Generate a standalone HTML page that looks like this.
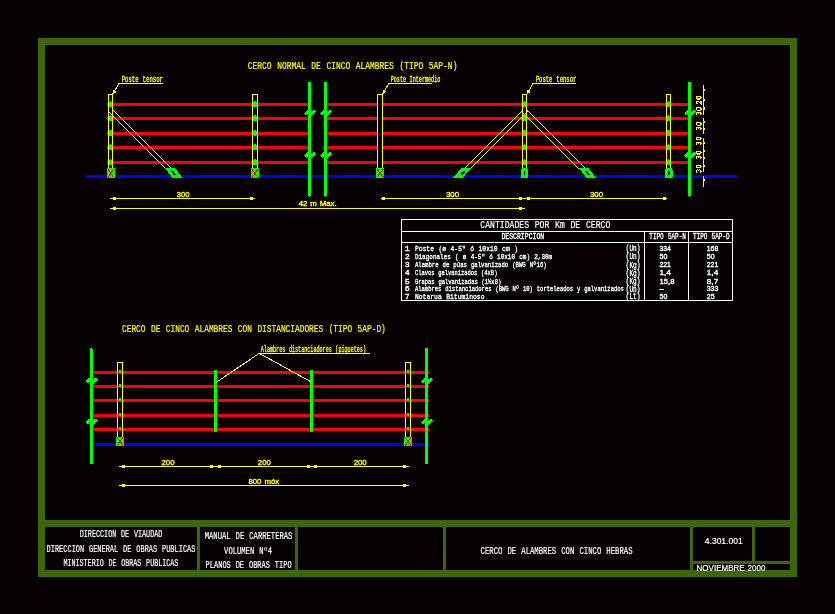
<!DOCTYPE html>
<html><head><meta charset="utf-8"><style>
html,body{margin:0;padding:0;background:#060000;width:835px;height:614px;overflow:hidden}
svg{display:block} text{will-change:transform} rect,line,polygon,path,ellipse{shape-rendering:crispEdges}
text{font-family:"Liberation Sans",sans-serif} .m{font-family:"Liberation Mono",monospace} .s{font-family:"Liberation Sans",sans-serif}
</style></head><body>
<svg width="835" height="614" viewBox="0 0 835 614">
<rect x="0" y="0" width="835" height="614" fill="#060000"/>
<rect x="38" y="38" width="759" height="7" fill="#3e6604" />
<rect x="38" y="570" width="759" height="7" fill="#3e6604" />
<rect x="38" y="38" width="7" height="539" fill="#3e6604" />
<rect x="790" y="38" width="7" height="539" fill="#3e6604" />
<rect x="38" y="520" width="759" height="7" fill="#3e6604" />
<rect x="197" y="527" width="3" height="43" fill="#3e6604" />
<rect x="295" y="527" width="3" height="43" fill="#3e6604" />
<rect x="443" y="527" width="3" height="43" fill="#3e6604" />
<rect x="690" y="527" width="3" height="43" fill="#3e6604" />
<rect x="752" y="527" width="3" height="34" fill="#3e6604" />
<rect x="693" y="561" width="97" height="3" fill="#3e6604" />
<rect x="107" y="102.8" width="204" height="3" fill="#ff0000" />
<rect x="327" y="102.8" width="363" height="3" fill="#ff0000" />
<rect x="107" y="116.9" width="204" height="3" fill="#ff0000" />
<rect x="327" y="116.9" width="363" height="3" fill="#ff0000" />
<rect x="107" y="131.6" width="204" height="3" fill="#ff0000" />
<rect x="327" y="131.6" width="363" height="3" fill="#ff0000" />
<rect x="107" y="145.9" width="204" height="3" fill="#ff0000" />
<rect x="327" y="145.9" width="363" height="3" fill="#ff0000" />
<rect x="107" y="160.9" width="204" height="3" fill="#ff0000" />
<rect x="327" y="160.9" width="363" height="3" fill="#ff0000" />
<rect x="86" y="174.9" width="651" height="3" fill="#0000ff" />
<line x1="108.5" y1="111.5" x2="166.5" y2="169.5" stroke="#ffff00" stroke-width="1" />
<line x1="112.5" y1="109.5" x2="172.5" y2="169.5" stroke="#ffff00" stroke-width="1" />
<line x1="522.5" y1="110.5" x2="463.5" y2="169.5" stroke="#ffff00" stroke-width="1" />
<line x1="527.5" y1="111.5" x2="469.5" y2="169.5" stroke="#ffff00" stroke-width="1" />
<line x1="527.5" y1="110.5" x2="586.5" y2="169.5" stroke="#ffff00" stroke-width="1" />
<line x1="521.5" y1="111.5" x2="579.5" y2="169.5" stroke="#ffff00" stroke-width="1" />
<rect x="377" y="94" width="6" height="74" fill="#000" />
<ellipse cx="110.5" cy="104.3" rx="2.1" ry="3" fill="#00ff00"/>
<ellipse cx="110.5" cy="118.4" rx="2.1" ry="3" fill="#00ff00"/>
<ellipse cx="110.5" cy="133.1" rx="2.1" ry="3" fill="#00ff00"/>
<ellipse cx="110.5" cy="147.4" rx="2.1" ry="3" fill="#00ff00"/>
<ellipse cx="110.5" cy="162.4" rx="2.1" ry="3" fill="#00ff00"/>
<rect x="108.5" y="94.5" width="4" height="74" fill="none" stroke="#ffff00" stroke-width="1"/>
<ellipse cx="255.0" cy="104.3" rx="2.1" ry="3" fill="#00ff00"/>
<ellipse cx="255.0" cy="118.4" rx="2.1" ry="3" fill="#00ff00"/>
<ellipse cx="255.0" cy="133.1" rx="2.1" ry="3" fill="#00ff00"/>
<ellipse cx="255.0" cy="147.4" rx="2.1" ry="3" fill="#00ff00"/>
<ellipse cx="255.0" cy="162.4" rx="2.1" ry="3" fill="#00ff00"/>
<rect x="252.5" y="94.5" width="5" height="74" fill="none" stroke="#ffff00" stroke-width="1"/>
<rect x="377.5" y="94.5" width="5" height="74" fill="none" stroke="#ffff00" stroke-width="1"/>
<ellipse cx="524.5" cy="104.3" rx="2.1" ry="3" fill="#00ff00"/>
<ellipse cx="524.5" cy="118.4" rx="2.1" ry="3" fill="#00ff00"/>
<ellipse cx="524.5" cy="133.1" rx="2.1" ry="3" fill="#00ff00"/>
<ellipse cx="524.5" cy="147.4" rx="2.1" ry="3" fill="#00ff00"/>
<ellipse cx="524.5" cy="162.4" rx="2.1" ry="3" fill="#00ff00"/>
<rect x="522.5" y="94.5" width="4" height="74" fill="none" stroke="#ffff00" stroke-width="1"/>
<ellipse cx="668.5" cy="104.3" rx="2.1" ry="3" fill="#00ff00"/>
<ellipse cx="668.5" cy="118.4" rx="2.1" ry="3" fill="#00ff00"/>
<ellipse cx="668.5" cy="133.1" rx="2.1" ry="3" fill="#00ff00"/>
<ellipse cx="668.5" cy="147.4" rx="2.1" ry="3" fill="#00ff00"/>
<ellipse cx="668.5" cy="162.4" rx="2.1" ry="3" fill="#00ff00"/>
<rect x="666.5" y="94.5" width="4" height="74" fill="none" stroke="#ffff00" stroke-width="1"/>
<rect x="107" y="168.3" width="7.5" height="9.699999999999989" fill="#00ff00" />
<line x1="108" y1="169.3" x2="113.5" y2="177.5" stroke="#ff0000" stroke-width="1" />
<line x1="113.5" y1="169.3" x2="108" y2="177.5" stroke="#ff0000" stroke-width="1" />
<rect x="251" y="168.3" width="8" height="9.699999999999989" fill="#00ff00" />
<line x1="252" y1="169.3" x2="258" y2="177.5" stroke="#ff0000" stroke-width="1" />
<line x1="258" y1="169.3" x2="252" y2="177.5" stroke="#ff0000" stroke-width="1" />
<rect x="376" y="168.3" width="8.300000000000011" height="9.199999999999989" fill="#00ff00" />
<line x1="377" y1="169.3" x2="383.3" y2="177.0" stroke="#ff0000" stroke-width="1" />
<line x1="383.3" y1="169.3" x2="377" y2="177.0" stroke="#ff0000" stroke-width="1" />
<rect x="521" y="168.3" width="7.2000000000000455" height="9.699999999999989" rx="1.5" fill="#00ff00"/>
<rect x="523.8000000000001" y="171.0" width="1.6" height="4.199999999999989" fill="#000" />
<rect x="665" y="168.3" width="7.5" height="9.699999999999989" rx="1.5" fill="#00ff00"/>
<rect x="667.95" y="171.0" width="1.6" height="4.199999999999989" fill="#000" />
<polygon points="165,168.3 175,168.3 182.5,177.8 172.5,177.8" fill="#00ff00"/>
<polygon points="170.5,170.8 173,170.8 176.5,175.3 174,175.3" fill="#000"/>
<polygon points="461.5,168.3 471,168.3 462.5,177.8 452.5,177.8" fill="#00ff00"/>
<polygon points="463.5,170.8 466,170.8 462.5,175.3 460,175.3" fill="#000"/>
<polygon points="579,168.3 588.5,168.3 596,177.8 586.5,177.8" fill="#00ff00"/>
<polygon points="584.5,170.8 587,170.8 590.5,175.3 588,175.3" fill="#000"/>
<rect x="308.0" y="82" width="3" height="114.5" fill="#00ff00" rx="1"/>
<path d="M305.0,114.3 L309.0,110.5 L310.7,114.3 L315.0,110.5" fill="none" stroke="#00ff00" stroke-width="3.2" stroke-linejoin="miter"/>
<path d="M305.0,156.8 L309.0,153 L310.7,156.8 L315.0,153" fill="none" stroke="#00ff00" stroke-width="3.2" stroke-linejoin="miter"/>
<rect x="324.0" y="82" width="3" height="114.5" fill="#00ff00" rx="1"/>
<path d="M321.0,114.3 L325.0,110.5 L326.7,114.3 L331.0,110.5" fill="none" stroke="#00ff00" stroke-width="3.2" stroke-linejoin="miter"/>
<path d="M321.0,156.8 L325.0,153 L326.7,156.8 L331.0,153" fill="none" stroke="#00ff00" stroke-width="3.2" stroke-linejoin="miter"/>
<rect x="688.3" y="82" width="3" height="114.5" fill="#00ff00" rx="1"/>
<path d="M685.3,114.3 L689.3,110.5 L691.0,114.3 L695.3,110.5" fill="none" stroke="#00ff00" stroke-width="3.2" stroke-linejoin="miter"/>
<path d="M685.3,156.8 L689.3,153 L691.0,156.8 L695.3,153" fill="none" stroke="#00ff00" stroke-width="3.2" stroke-linejoin="miter"/>
<text class="m" x="121.70" y="81.60" font-size="8.35" fill="#ffff00" stroke="#ffff00" stroke-width="0.35" style="word-spacing:0.83px" textLength="41.30" lengthAdjust="spacingAndGlyphs">Poste tensor</text>
<line x1="119" y1="83.4" x2="163" y2="83.4" stroke="#ffff00" stroke-width="1" />
<line x1="119" y1="83.4" x2="112.8" y2="94" stroke="#ffff00" stroke-width="1" />
<polygon points="112.8,94.3 113.2,89.8 116.6,91.8" fill="#ffff00"/>
<text class="m" x="390.70" y="82.00" font-size="8.35" fill="#ffff00" stroke="#ffff00" stroke-width="0.35" style="word-spacing:0.83px" textLength="49.60" lengthAdjust="spacingAndGlyphs">Poste Intermedio</text>
<line x1="389" y1="83.4" x2="432" y2="83.4" stroke="#ffff00" stroke-width="1" />
<line x1="389" y1="83.4" x2="382.5" y2="94" stroke="#ffff00" stroke-width="1" />
<polygon points="382.5,94.3 382.9,89.8 386.3,91.8" fill="#ffff00"/>
<text class="m" x="535.70" y="81.70" font-size="8.35" fill="#ffff00" stroke="#ffff00" stroke-width="0.35" style="word-spacing:0.83px" textLength="40.70" lengthAdjust="spacingAndGlyphs">Poste tensor</text>
<line x1="533" y1="83.4" x2="576" y2="83.4" stroke="#ffff00" stroke-width="1" />
<line x1="533" y1="83.4" x2="527" y2="94" stroke="#ffff00" stroke-width="1" />
<polygon points="527,94.3 527.4,89.8 530.8,91.8" fill="#ffff00"/>
<text class="m" x="247.80" y="68.80" font-size="10.17" fill="#ffff00" stroke="#ffff00" stroke-width="0.2" style="word-spacing:1.02px" textLength="209.60" lengthAdjust="spacingAndGlyphs">CERCO NORMAL DE CINCO ALAMBRES (TIPO 5AP-N)</text>
<rect x="702.8" y="85" width="1.3" height="29.799999999999997" fill="#ffff00" />
<rect x="702.8" y="117.9" width="1.3" height="16.0" fill="#ffff00" />
<rect x="702.8" y="137.8" width="1.3" height="34.0" fill="#ffff00" />
<rect x="702.8" y="176" width="1.3" height="10.699999999999989" fill="#ffff00" />
<rect x="703.5" y="89.1" width="1.6" height="2.2" fill="#ffff00" />
<rect x="703.5" y="99.2" width="1.6" height="2.2" fill="#ffff00" />
<rect x="703.5" y="107.3" width="1.6" height="2.2" fill="#ffff00" />
<rect x="703.5" y="120.8" width="1.6" height="2.2" fill="#ffff00" />
<rect x="703.5" y="128" width="1.6" height="2.2" fill="#ffff00" />
<rect x="703.5" y="142" width="1.6" height="2.2" fill="#ffff00" />
<rect x="703.5" y="150.1" width="1.6" height="2.2" fill="#ffff00" />
<rect x="703.5" y="157.1" width="1.6" height="2.2" fill="#ffff00" />
<rect x="703.5" y="164.6" width="1.6" height="2.2" fill="#ffff00" />
<rect x="703.5" y="179" width="1.6" height="2.2" fill="#ffff00" />
<g transform="translate(701.5,100) rotate(-90)" fill="none" stroke="#ffff00" stroke-width="1.05" style="shape-rendering:crispEdges"><path transform="translate(-4.1,-5.3)" d="M0.3,1.3 Q0.5,0.5 1.6,0.5 Q2.9,0.5 2.9,1.6 Q2.9,2.5 1.5,3.4 L0.3,4.8 H2.9" style="shape-rendering:crispEdges"/><path transform="translate(0.7,-5.3)" d="M0.9,0.5 H2.3 Q2.9,0.5 2.9,1.2 V4.1 Q2.9,4.8 2.3,4.8 H0.9 Q0.3,4.8 0.3,4.1 V1.2 Q0.3,0.5 0.9,0.5 Z" style="shape-rendering:crispEdges"/></g>
<g transform="translate(701.5,111.2) rotate(-90)" fill="none" stroke="#ffff00" stroke-width="1.05" style="shape-rendering:crispEdges"><path transform="translate(-4.1,-5.3)" d="M0.3,1.0 Q0.5,0.5 1.1,0.5 H2.1 Q2.9,0.5 2.9,1.5 Q2.9,2.6 1.5,2.6 H2.1 Q2.9,2.6 2.9,3.7 Q2.9,4.8 2.1,4.8 H1.1 Q0.5,4.8 0.3,4.3" style="shape-rendering:crispEdges"/><path transform="translate(0.7,-5.3)" d="M0.9,0.5 H2.3 Q2.9,0.5 2.9,1.2 V4.1 Q2.9,4.8 2.3,4.8 H0.9 Q0.3,4.8 0.3,4.1 V1.2 Q0.3,0.5 0.9,0.5 Z" style="shape-rendering:crispEdges"/></g>
<g transform="translate(701.5,126.1) rotate(-90)" fill="none" stroke="#ffff00" stroke-width="1.05" style="shape-rendering:crispEdges"><path transform="translate(-4.1,-5.3)" d="M0.3,1.0 Q0.5,0.5 1.1,0.5 H2.1 Q2.9,0.5 2.9,1.5 Q2.9,2.6 1.5,2.6 H2.1 Q2.9,2.6 2.9,3.7 Q2.9,4.8 2.1,4.8 H1.1 Q0.5,4.8 0.3,4.3" style="shape-rendering:crispEdges"/><path transform="translate(0.7,-5.3)" d="M0.9,0.5 H2.3 Q2.9,0.5 2.9,1.2 V4.1 Q2.9,4.8 2.3,4.8 H0.9 Q0.3,4.8 0.3,4.1 V1.2 Q0.3,0.5 0.9,0.5 Z" style="shape-rendering:crispEdges"/></g>
<g transform="translate(701.5,140.9) rotate(-90)" fill="none" stroke="#ffff00" stroke-width="1.05" style="shape-rendering:crispEdges"><path transform="translate(-4.1,-5.3)" d="M0.3,1.0 Q0.5,0.5 1.1,0.5 H2.1 Q2.9,0.5 2.9,1.5 Q2.9,2.6 1.5,2.6 H2.1 Q2.9,2.6 2.9,3.7 Q2.9,4.8 2.1,4.8 H1.1 Q0.5,4.8 0.3,4.3" style="shape-rendering:crispEdges"/><path transform="translate(0.7,-5.3)" d="M0.9,0.5 H2.3 Q2.9,0.5 2.9,1.2 V4.1 Q2.9,4.8 2.3,4.8 H0.9 Q0.3,4.8 0.3,4.1 V1.2 Q0.3,0.5 0.9,0.5 Z" style="shape-rendering:crispEdges"/></g>
<g transform="translate(701.5,155) rotate(-90)" fill="none" stroke="#ffff00" stroke-width="1.05" style="shape-rendering:crispEdges"><path transform="translate(-4.1,-5.3)" d="M0.3,1.0 Q0.5,0.5 1.1,0.5 H2.1 Q2.9,0.5 2.9,1.5 Q2.9,2.6 1.5,2.6 H2.1 Q2.9,2.6 2.9,3.7 Q2.9,4.8 2.1,4.8 H1.1 Q0.5,4.8 0.3,4.3" style="shape-rendering:crispEdges"/><path transform="translate(0.7,-5.3)" d="M0.9,0.5 H2.3 Q2.9,0.5 2.9,1.2 V4.1 Q2.9,4.8 2.3,4.8 H0.9 Q0.3,4.8 0.3,4.1 V1.2 Q0.3,0.5 0.9,0.5 Z" style="shape-rendering:crispEdges"/></g>
<g transform="translate(701.5,168.7) rotate(-90)" fill="none" stroke="#ffff00" stroke-width="1.05" style="shape-rendering:crispEdges"><path transform="translate(-4.1,-5.3)" d="M0.3,1.0 Q0.5,0.5 1.1,0.5 H2.1 Q2.9,0.5 2.9,1.5 Q2.9,2.6 1.5,2.6 H2.1 Q2.9,2.6 2.9,3.7 Q2.9,4.8 2.1,4.8 H1.1 Q0.5,4.8 0.3,4.3" style="shape-rendering:crispEdges"/><path transform="translate(0.7,-5.3)" d="M0.9,0.5 H2.3 Q2.9,0.5 2.9,1.2 V4.1 Q2.9,4.8 2.3,4.8 H0.9 Q0.3,4.8 0.3,4.1 V1.2 Q0.3,0.5 0.9,0.5 Z" style="shape-rendering:crispEdges"/></g>
<line x1="110" y1="198.4" x2="254.5" y2="198.4" stroke="#ffff00" stroke-width="1.3" />
<rect x="113.0" y="196.9" width="3" height="3" fill="#ffff00" />
<rect x="250.0" y="196.9" width="3" height="3" fill="#ffff00" />
<line x1="380.5" y1="198.4" x2="666.5" y2="198.4" stroke="#ffff00" stroke-width="1.3" />
<rect x="382.0" y="196.9" width="3" height="3" fill="#ffff00" />
<rect x="519.0" y="196.9" width="3" height="3" fill="#ffff00" />
<rect x="527.0" y="196.9" width="3" height="3" fill="#ffff00" />
<rect x="663.0" y="196.9" width="3" height="3" fill="#ffff00" />
<line x1="110" y1="208.4" x2="525" y2="208.4" stroke="#ffff00" stroke-width="1.3" />
<rect x="113.0" y="206.9" width="3" height="3" fill="#ffff00" />
<rect x="519.0" y="206.9" width="3" height="3" fill="#ffff00" />
<text class="s" x="176.80" y="197.10" font-size="7.96" fill="#ffff00" stroke="#ffff00" stroke-width="0.35" style="word-spacing:0.80px" textLength="12.80" lengthAdjust="spacingAndGlyphs">300</text>
<text class="s" x="445.90" y="197.20" font-size="7.96" fill="#ffff00" stroke="#ffff00" stroke-width="0.35" style="word-spacing:0.80px" textLength="13.20" lengthAdjust="spacingAndGlyphs">300</text>
<text class="s" x="589.90" y="197.20" font-size="7.96" fill="#ffff00" stroke="#ffff00" stroke-width="0.35" style="word-spacing:0.80px" textLength="13.40" lengthAdjust="spacingAndGlyphs">300</text>
<text class="s" x="298.70" y="205.90" font-size="6.84" fill="#ffff00" stroke="#ffff00" stroke-width="0.35" style="word-spacing:0.68px" textLength="38.00" lengthAdjust="spacingAndGlyphs">42 m Max.</text>
<line x1="401" y1="219.5" x2="733" y2="219.5" stroke="#ffffff" stroke-width="1" />
<line x1="401" y1="231.5" x2="733" y2="231.5" stroke="#ffffff" stroke-width="1" />
<line x1="401" y1="242.5" x2="733" y2="242.5" stroke="#ffffff" stroke-width="1" />
<line x1="401" y1="300.5" x2="733" y2="300.5" stroke="#ffffff" stroke-width="1" />
<line x1="401.5" y1="219" x2="401.5" y2="301" stroke="#ffffff" stroke-width="1" />
<line x1="732.5" y1="219" x2="732.5" y2="301" stroke="#ffffff" stroke-width="1" />
<line x1="644.5" y1="231" x2="644.5" y2="301" stroke="#ffffff" stroke-width="1" />
<line x1="688.5" y1="231" x2="688.5" y2="301" stroke="#ffffff" stroke-width="1" />
<text class="m" x="480.30" y="228.40" font-size="10.17" fill="#ffffff" stroke="#ffffff" stroke-width="0.2" style="word-spacing:1.02px" textLength="130.00" lengthAdjust="spacingAndGlyphs">CANTIDADES POR Km DE CERCO</text>
<text class="m" x="501.40" y="239.00" font-size="8.80" fill="#ffffff" stroke="#ffffff" stroke-width="0.35" style="word-spacing:0.88px" textLength="42.80" lengthAdjust="spacingAndGlyphs">DESCRIPCION</text>
<text class="m" x="649.30" y="239.30" font-size="8.80" fill="#ffffff" stroke="#ffffff" stroke-width="0.35" style="word-spacing:0.88px" textLength="36.60" lengthAdjust="spacingAndGlyphs">TIPO 5AP-N</text>
<text class="m" x="693.00" y="239.30" font-size="8.80" fill="#ffffff" stroke="#ffffff" stroke-width="0.35" style="word-spacing:0.88px" textLength="36.60" lengthAdjust="spacingAndGlyphs">TIPO 5AP-D</text>
<text class="m" x="404.70" y="250.80" font-size="7.59" fill="#ffffff" stroke="#ffffff" stroke-width="0.35" style="word-spacing:0.76px" textLength="5.00" lengthAdjust="spacingAndGlyphs">1</text>
<text class="m" x="414.90" y="250.80" font-size="7.59" fill="#ffffff" stroke="#ffffff" stroke-width="0.35" style="word-spacing:0.76px" textLength="103.10" lengthAdjust="spacingAndGlyphs">Poste (&#248; 4-5" &#243; 10x10 cm )</text>
<text class="m" x="625.80" y="251.30" font-size="8.50" fill="#ffffff" stroke="#ffffff" stroke-width="0.35" style="word-spacing:0.85px" textLength="14.60" lengthAdjust="spacingAndGlyphs">(Un)</text>
<text class="s" x="659.50" y="250.80" font-size="7.26" fill="#ffffff" stroke="#ffffff" stroke-width="0.35" style="word-spacing:0.73px" textLength="11.40" lengthAdjust="spacingAndGlyphs">334</text>
<text class="s" x="706.80" y="250.80" font-size="7.26" fill="#ffffff" stroke="#ffffff" stroke-width="0.35" style="word-spacing:0.73px" textLength="11.40" lengthAdjust="spacingAndGlyphs">168</text>
<text class="m" x="404.70" y="258.80" font-size="7.59" fill="#ffffff" stroke="#ffffff" stroke-width="0.35" style="word-spacing:0.76px" textLength="5.00" lengthAdjust="spacingAndGlyphs">2</text>
<text class="m" x="414.90" y="258.80" font-size="7.59" fill="#ffffff" stroke="#ffffff" stroke-width="0.35" style="word-spacing:0.76px" textLength="137.30" lengthAdjust="spacingAndGlyphs">Diagonales ( &#248; 4-5" &#243; 10x10 cm) 2,30m</text>
<text class="m" x="625.80" y="259.30" font-size="8.50" fill="#ffffff" stroke="#ffffff" stroke-width="0.35" style="word-spacing:0.85px" textLength="14.60" lengthAdjust="spacingAndGlyphs">(Un)</text>
<text class="s" x="659.50" y="258.80" font-size="7.26" fill="#ffffff" stroke="#ffffff" stroke-width="0.35" style="word-spacing:0.73px" textLength="7.80" lengthAdjust="spacingAndGlyphs">50</text>
<text class="s" x="706.80" y="258.80" font-size="7.26" fill="#ffffff" stroke="#ffffff" stroke-width="0.35" style="word-spacing:0.73px" textLength="7.80" lengthAdjust="spacingAndGlyphs">50</text>
<text class="m" x="404.70" y="267.20" font-size="7.59" fill="#ffffff" stroke="#ffffff" stroke-width="0.35" style="word-spacing:0.76px" textLength="5.00" lengthAdjust="spacingAndGlyphs">3</text>
<text class="m" x="414.90" y="267.20" font-size="7.59" fill="#ffffff" stroke="#ffffff" stroke-width="0.35" style="word-spacing:0.76px" textLength="131.80" lengthAdjust="spacingAndGlyphs">Alambre de p&#250;as galvanizado (BWG N&#186;16)</text>
<text class="m" x="625.80" y="267.70" font-size="8.50" fill="#ffffff" stroke="#ffffff" stroke-width="0.35" style="word-spacing:0.85px" textLength="14.60" lengthAdjust="spacingAndGlyphs">(Kg)</text>
<text class="s" x="659.50" y="267.20" font-size="7.26" fill="#ffffff" stroke="#ffffff" stroke-width="0.35" style="word-spacing:0.73px" textLength="11.40" lengthAdjust="spacingAndGlyphs">221</text>
<text class="s" x="706.80" y="267.20" font-size="7.26" fill="#ffffff" stroke="#ffffff" stroke-width="0.35" style="word-spacing:0.73px" textLength="11.40" lengthAdjust="spacingAndGlyphs">221</text>
<text class="m" x="404.70" y="275.20" font-size="7.59" fill="#ffffff" stroke="#ffffff" stroke-width="0.35" style="word-spacing:0.76px" textLength="5.00" lengthAdjust="spacingAndGlyphs">4</text>
<text class="m" x="414.90" y="275.20" font-size="7.59" fill="#ffffff" stroke="#ffffff" stroke-width="0.35" style="word-spacing:0.76px" textLength="82.50" lengthAdjust="spacingAndGlyphs">Clavos galvanizados (4x8)</text>
<text class="m" x="625.80" y="275.70" font-size="8.50" fill="#ffffff" stroke="#ffffff" stroke-width="0.35" style="word-spacing:0.85px" textLength="14.60" lengthAdjust="spacingAndGlyphs">(Kg)</text>
<text class="s" x="659.50" y="275.20" font-size="7.26" fill="#ffffff" stroke="#ffffff" stroke-width="0.35" style="word-spacing:0.73px" textLength="11.40" lengthAdjust="spacingAndGlyphs">1,4</text>
<text class="s" x="706.80" y="275.20" font-size="7.26" fill="#ffffff" stroke="#ffffff" stroke-width="0.35" style="word-spacing:0.73px" textLength="11.40" lengthAdjust="spacingAndGlyphs">1,4</text>
<text class="m" x="404.70" y="283.50" font-size="7.59" fill="#ffffff" stroke="#ffffff" stroke-width="0.35" style="word-spacing:0.76px" textLength="5.00" lengthAdjust="spacingAndGlyphs">5</text>
<text class="m" x="414.90" y="283.50" font-size="7.59" fill="#ffffff" stroke="#ffffff" stroke-width="0.35" style="word-spacing:0.76px" textLength="86.30" lengthAdjust="spacingAndGlyphs">Grapas galvanizadas (1&#189;x8)</text>
<text class="m" x="625.80" y="284.00" font-size="8.50" fill="#ffffff" stroke="#ffffff" stroke-width="0.35" style="word-spacing:0.85px" textLength="14.60" lengthAdjust="spacingAndGlyphs">(Kg)</text>
<text class="s" x="659.50" y="283.50" font-size="7.26" fill="#ffffff" stroke="#ffffff" stroke-width="0.35" style="word-spacing:0.73px" textLength="15.00" lengthAdjust="spacingAndGlyphs">15,8</text>
<text class="s" x="706.80" y="283.50" font-size="7.26" fill="#ffffff" stroke="#ffffff" stroke-width="0.35" style="word-spacing:0.73px" textLength="11.40" lengthAdjust="spacingAndGlyphs">8,7</text>
<text class="m" x="404.70" y="291.30" font-size="7.59" fill="#ffffff" stroke="#ffffff" stroke-width="0.35" style="word-spacing:0.76px" textLength="5.00" lengthAdjust="spacingAndGlyphs">6</text>
<text class="m" x="414.90" y="291.30" font-size="7.59" fill="#ffffff" stroke="#ffffff" stroke-width="0.35" style="word-spacing:0.76px" textLength="209.00" lengthAdjust="spacingAndGlyphs">Alambres distanciadores (BWG N&#186; 10) torteleados y galvanizados</text>
<text class="m" x="625.80" y="291.80" font-size="8.50" fill="#ffffff" stroke="#ffffff" stroke-width="0.35" style="word-spacing:0.85px" textLength="14.60" lengthAdjust="spacingAndGlyphs">(Un)</text>
<text class="s" x="659.50" y="291.30" font-size="7.26" fill="#ffffff" stroke="#ffffff" stroke-width="0.35" style="word-spacing:0.73px" textLength="4.20" lengthAdjust="spacingAndGlyphs">&#8211;</text>
<text class="s" x="706.80" y="291.30" font-size="7.26" fill="#ffffff" stroke="#ffffff" stroke-width="0.35" style="word-spacing:0.73px" textLength="11.40" lengthAdjust="spacingAndGlyphs">333</text>
<text class="m" x="404.70" y="298.60" font-size="7.59" fill="#ffffff" stroke="#ffffff" stroke-width="0.35" style="word-spacing:0.76px" textLength="5.00" lengthAdjust="spacingAndGlyphs">7</text>
<text class="m" x="414.90" y="298.60" font-size="7.59" fill="#ffffff" stroke="#ffffff" stroke-width="0.35" style="word-spacing:0.76px" textLength="69.60" lengthAdjust="spacingAndGlyphs">Notarua Bituminoso</text>
<text class="m" x="625.80" y="299.10" font-size="8.50" fill="#ffffff" stroke="#ffffff" stroke-width="0.35" style="word-spacing:0.85px" textLength="14.60" lengthAdjust="spacingAndGlyphs">(Lt)</text>
<text class="s" x="659.50" y="298.60" font-size="7.26" fill="#ffffff" stroke="#ffffff" stroke-width="0.35" style="word-spacing:0.73px" textLength="7.80" lengthAdjust="spacingAndGlyphs">50</text>
<text class="s" x="706.80" y="298.60" font-size="7.26" fill="#ffffff" stroke="#ffffff" stroke-width="0.35" style="word-spacing:0.73px" textLength="7.80" lengthAdjust="spacingAndGlyphs">25</text>
<rect x="90.5" y="370.6" width="338" height="3" fill="#ff0000" />
<rect x="90.5" y="384.9" width="338" height="3" fill="#ff0000" />
<rect x="90.5" y="398.9" width="338" height="3" fill="#ff0000" />
<rect x="90.5" y="413.6" width="338" height="3" fill="#ff0000" />
<rect x="90.5" y="427.9" width="338" height="3" fill="#ff0000" />
<rect x="90.5" y="442.8" width="338" height="3" fill="#0000ff" />
<rect x="213.9" y="369.8" width="3" height="62" fill="#00ff00" rx="1"/>
<rect x="309.8" y="369.8" width="3" height="62" fill="#00ff00" rx="1"/>
<rect x="117.5" y="362.8" width="5" height="74.30000000000001" fill="none" stroke="#ffff00" stroke-width="1"/>
<rect x="405.5" y="362.8" width="5" height="74.30000000000001" fill="none" stroke="#ffff00" stroke-width="1"/>
<polygon points="118.7,372.1 120,368.3 121.3,372.1" fill="#00ff00"/>
<rect x="119.4" y="370.6" width="1.2" height="2.5" fill="#00ff00" />
<polygon points="118.7,386.4 120,382.59999999999997 121.3,386.4" fill="#00ff00"/>
<rect x="119.4" y="384.9" width="1.2" height="2.5" fill="#00ff00" />
<polygon points="118.7,400.4 120,396.59999999999997 121.3,400.4" fill="#00ff00"/>
<rect x="119.4" y="398.9" width="1.2" height="2.5" fill="#00ff00" />
<polygon points="118.7,415.1 120,411.3 121.3,415.1" fill="#00ff00"/>
<rect x="119.4" y="413.6" width="1.2" height="2.5" fill="#00ff00" />
<polygon points="118.7,429.4 120,425.59999999999997 121.3,429.4" fill="#00ff00"/>
<rect x="119.4" y="427.9" width="1.2" height="2.5" fill="#00ff00" />
<polygon points="406.7,372.1 408,368.3 409.3,372.1" fill="#00ff00"/>
<rect x="407.4" y="370.6" width="1.2" height="2.5" fill="#00ff00" />
<polygon points="406.7,386.4 408,382.59999999999997 409.3,386.4" fill="#00ff00"/>
<rect x="407.4" y="384.9" width="1.2" height="2.5" fill="#00ff00" />
<polygon points="406.7,400.4 408,396.59999999999997 409.3,400.4" fill="#00ff00"/>
<rect x="407.4" y="398.9" width="1.2" height="2.5" fill="#00ff00" />
<polygon points="406.7,415.1 408,411.3 409.3,415.1" fill="#00ff00"/>
<rect x="407.4" y="413.6" width="1.2" height="2.5" fill="#00ff00" />
<polygon points="406.7,429.4 408,425.59999999999997 409.3,429.4" fill="#00ff00"/>
<rect x="407.4" y="427.9" width="1.2" height="2.5" fill="#00ff00" />
<rect x="116" y="436.6" width="8" height="8.899999999999977" fill="#00ff00" />
<line x1="117" y1="437.6" x2="123" y2="445.0" stroke="#ff0000" stroke-width="1" />
<line x1="123" y1="437.6" x2="117" y2="445.0" stroke="#ff0000" stroke-width="1" />
<rect x="404.2" y="436.6" width="7.800000000000011" height="9.399999999999977" fill="#00ff00" />
<line x1="405.2" y1="437.6" x2="411" y2="445.5" stroke="#ff0000" stroke-width="1" />
<line x1="411" y1="437.6" x2="405.2" y2="445.5" stroke="#ff0000" stroke-width="1" />
<rect x="89.8" y="348.3" width="3" height="115.5" fill="#00ff00" rx="1"/>
<path d="M86.8,382.3 L90.8,378.5 L92.5,382.3 L96.8,378.5" fill="none" stroke="#00ff00" stroke-width="3.2" stroke-linejoin="miter"/>
<path d="M86.8,423.3 L90.8,419.5 L92.5,423.3 L96.8,419.5" fill="none" stroke="#00ff00" stroke-width="3.2" stroke-linejoin="miter"/>
<rect x="425.0" y="348.3" width="3" height="115.5" fill="#00ff00" rx="1"/>
<path d="M422.0,382.3 L426.0,378.5 L427.7,382.3 L432.0,378.5" fill="none" stroke="#00ff00" stroke-width="3.2" stroke-linejoin="miter"/>
<path d="M422.0,423.3 L426.0,419.5 L427.7,423.3 L432.0,419.5" fill="none" stroke="#00ff00" stroke-width="3.2" stroke-linejoin="miter"/>
<text class="m" x="122.00" y="332.40" font-size="10.32" fill="#ffff00" stroke="#ffff00" stroke-width="0.2" style="word-spacing:1.03px" textLength="263.80" lengthAdjust="spacingAndGlyphs">CERCO DE CINCO ALAMBRES CON DISTANCIADORES (TIPO 5AP-D)</text>
<text class="m" x="260.80" y="351.60" font-size="8.35" fill="#ffff00" stroke="#ffff00" stroke-width="0.35" style="word-spacing:0.83px" textLength="105.20" lengthAdjust="spacingAndGlyphs">Alambres distanciadores (piquetes)</text>
<line x1="259.3" y1="353.3" x2="370" y2="353.3" stroke="#ffff00" stroke-width="1" />
<line x1="259.3" y1="353.3" x2="216.2" y2="382.4" stroke="#ffff00" stroke-width="1" />
<line x1="259.3" y1="353.3" x2="312" y2="382.4" stroke="#ffff00" stroke-width="1" />
<line x1="119.3" y1="466.5" x2="408.9" y2="466.5" stroke="#ffff00" stroke-width="1.3" />
<rect x="122.0" y="465.0" width="3" height="3" fill="#ffff00" />
<rect x="209.8" y="465.0" width="3" height="3" fill="#ffff00" />
<rect x="218.0" y="465.0" width="3" height="3" fill="#ffff00" />
<rect x="306.5" y="465.0" width="3" height="3" fill="#ffff00" />
<rect x="314.0" y="465.0" width="3" height="3" fill="#ffff00" />
<rect x="402.9" y="465.0" width="3" height="3" fill="#ffff00" />
<line x1="119.3" y1="485.4" x2="408.9" y2="485.4" stroke="#ffff00" stroke-width="1.3" />
<rect x="122.0" y="483.9" width="3" height="3" fill="#ffff00" />
<rect x="402.9" y="483.9" width="3" height="3" fill="#ffff00" />
<text class="s" x="161.40" y="464.70" font-size="7.82" fill="#ffff00" stroke="#ffff00" stroke-width="0.35" style="word-spacing:0.78px" textLength="13.20" lengthAdjust="spacingAndGlyphs">200</text>
<text class="s" x="257.80" y="464.70" font-size="7.82" fill="#ffff00" stroke="#ffff00" stroke-width="0.35" style="word-spacing:0.78px" textLength="13.00" lengthAdjust="spacingAndGlyphs">200</text>
<text class="s" x="353.70" y="464.70" font-size="7.82" fill="#ffff00" stroke="#ffff00" stroke-width="0.35" style="word-spacing:0.78px" textLength="13.00" lengthAdjust="spacingAndGlyphs">200</text>
<text class="s" x="248.40" y="483.90" font-size="7.68" fill="#ffff00" stroke="#ffff00" stroke-width="0.35" style="word-spacing:0.77px" textLength="30.90" lengthAdjust="spacingAndGlyphs">800 m&#243;x</text>
<text class="m" x="79.70" y="536.90" font-size="10.02" fill="#ffffff" stroke="#ffffff" stroke-width="0.2" style="word-spacing:1.00px" textLength="82.70" lengthAdjust="spacingAndGlyphs">DIRECCION DE VIAUDAD</text>
<text class="m" x="46.60" y="551.70" font-size="10.32" fill="#ffffff" stroke="#ffffff" stroke-width="0.2" style="word-spacing:1.03px" textLength="148.80" lengthAdjust="spacingAndGlyphs">DIRECCION GENERAL DE OBRAS PUBLICAS</text>
<text class="m" x="63.40" y="566.10" font-size="10.32" fill="#ffffff" stroke="#ffffff" stroke-width="0.2" style="word-spacing:1.03px" textLength="115.00" lengthAdjust="spacingAndGlyphs">MINISTERIO DE OBRAS PUBLICAS</text>
<text class="m" x="204.70" y="539.00" font-size="10.02" fill="#ffffff" stroke="#ffffff" stroke-width="0.2" style="word-spacing:1.00px" textLength="87.70" lengthAdjust="spacingAndGlyphs">MANUAL DE CARRETERAS</text>
<text class="m" x="224.10" y="554.00" font-size="10.02" fill="#ffffff" stroke="#ffffff" stroke-width="0.2" style="word-spacing:1.00px" textLength="48.00" lengthAdjust="spacingAndGlyphs">VOLUMEN N&#186;4</text>
<text class="m" x="205.60" y="567.70" font-size="10.02" fill="#ffffff" stroke="#ffffff" stroke-width="0.2" style="word-spacing:1.00px" textLength="86.00" lengthAdjust="spacingAndGlyphs">PLANOS DE OBRAS TIPO</text>
<text class="m" x="480.60" y="554.20" font-size="10.62" fill="#ffffff" stroke="#ffffff" stroke-width="0.2" style="word-spacing:1.06px" textLength="151.90" lengthAdjust="spacingAndGlyphs">CERCO DE ALAMBRES CON CINCO HEBRAS</text>
<text class="s" x="704.80" y="543.90" font-size="9.36" fill="#ffffff" stroke="#ffffff" stroke-width="0.2" style="word-spacing:0.94px" textLength="37.90" lengthAdjust="spacingAndGlyphs">4.301.001</text>
<text class="s" x="696.60" y="570.70" font-size="9.36" fill="#ffffff" stroke="#ffffff" stroke-width="0.2" style="word-spacing:0.94px" textLength="68.80" lengthAdjust="spacingAndGlyphs">NOVIEMBRE 2000</text>
</svg>
</body></html>
